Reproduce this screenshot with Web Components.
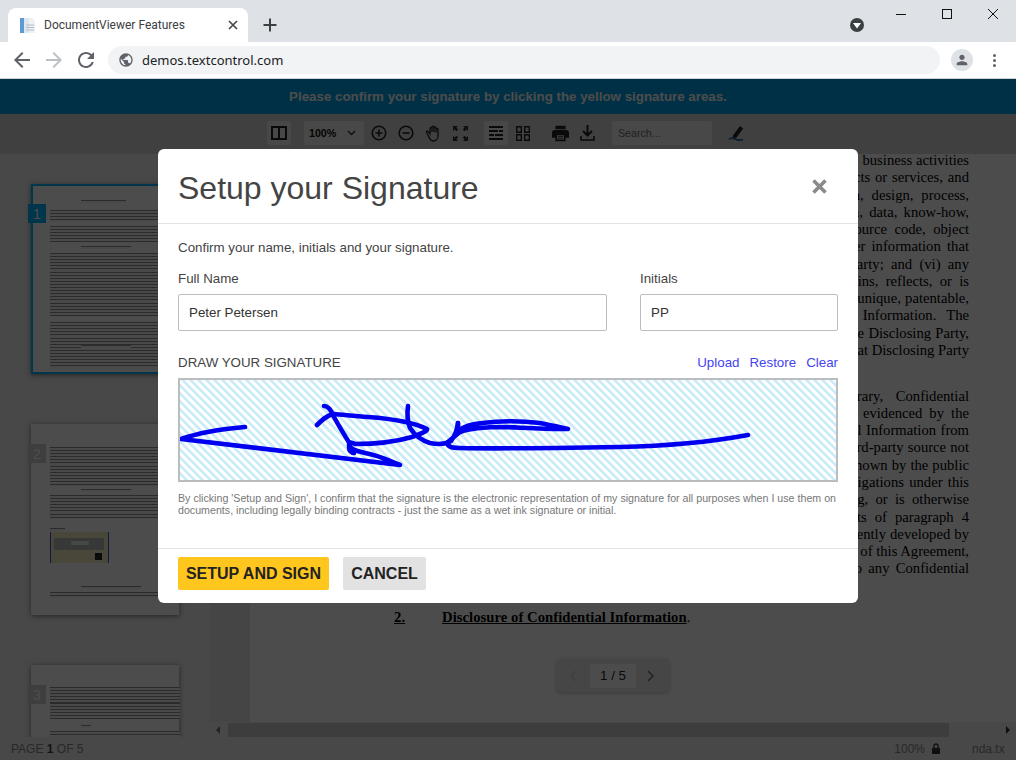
<!DOCTYPE html>
<html>
<head>
<meta charset="utf-8">
<title>DocumentViewer Features</title>
<style>
  html, body { margin: 0; height: 760px; overflow: hidden; }
  body { font-family: "Liberation Sans", Arial, sans-serif; background: #fff; }
</style>
</head>
<body>
<browser-chrome></browser-chrome>
<viewer-app>
  <sig-dialog></sig-dialog>
</viewer-app>

<script>
class BrowserChrome extends HTMLElement {
  connectedCallback() {
    const root = this.attachShadow({ mode: "open" });
    root.innerHTML = `
      <style>
        :host { display: block; height: 79px; font-family: "Noto Sans", sans-serif; }
        .strip { height: 42px; background: #dee1e6; display: flex; position: relative; padding: 8px 0 0 8px; box-sizing: border-box; }
        .tab { width: 240px; height: 34px; background: #fff; border-radius: 8px 8px 0 0; display: flex; align-items: center; box-sizing: border-box; padding: 0 9px 0 12px; font: 12px Roboto, sans-serif; color: #3c4043; }
        .tab .title { margin-left: 8px; flex: 1; white-space: nowrap; }
        .plus { margin: 7px 0 0 12px; width: 20px; height: 20px; }
        .spacer { flex: 1; }
        .win { display: flex; align-items: flex-start; }
        .ext { margin: 9px 13px 0 0; width: 16px; height: 16px; }
        .winbtn { width: 46px; height: 28px; margin-top: -8px; display: flex; align-items: center; justify-content: center; }
        .bar { height: 36px; background: #fff; display: flex; align-items: center; padding: 0 0 0 10px; border-bottom: 1px solid #d0d2d6; }
        .nav { width: 24px; height: 24px; margin-right: 8px; display: block; }
        .omni { flex: 1; margin-left: 2px; height: 28px; border-radius: 14px; background: #f1f3f4; display: flex; align-items: center; padding-left: 10px; font-size: 13px; color: #202124; }
        .omni svg { width: 16px; height: 16px; margin-right: 8px; }
        .profile { width: 22px; height: 22px; border-radius: 50%; background: #dee1e6; margin: 0 20px 0 11px; display: flex; align-items: center; justify-content: center; }
        .dots { width: 4px; margin-right: 19px; display: flex; flex-direction: column; gap: 2px; }
        .dots i { width: 3px; height: 3px; border-radius: 50%; background: #5f6368; display: block; }
      </style>
      <div class="strip">
        <div class="tab">
          <svg width="16" height="16" viewBox="0 0 16 16">
            <rect x="0" y="1" width="5" height="15" fill="#5b9bd5"/>
            <rect x="4" y="1" width="8" height="15" fill="#dfe6ec"/>
            <path d="M9 1h3l3 3v12H9z" fill="#eef1f4"/>
            <path d="M6 8h8M6 10.5h8M6 13h8" stroke="#b4bec8" stroke-width="1"/>
          </svg>
          <span class="title">DocumentViewer Features</span>
          <svg width="12" height="12" viewBox="0 0 12 12"><path d="M2 2l8 8M10 2l-8 8" stroke="#45484c" stroke-width="1.7"/></svg>
        </div>
        <svg class="plus" viewBox="0 0 20 20"><path d="M10 3.5v13M3.5 10h13" stroke="#3c4043" stroke-width="2"/></svg>
        <div class="spacer"></div>
        <div class="win">
          <svg class="ext" viewBox="0 0 16 16"><circle cx="8" cy="8" r="7" fill="#3c4043"/><path d="M4 6h8l-4 5.4z" fill="#fff"/></svg>
          <div class="winbtn"><svg width="12" height="12" viewBox="0 0 12 12"><path d="M1 6.5h10" stroke="#111" stroke-width="1"/></svg></div>
          <div class="winbtn"><svg width="12" height="12" viewBox="0 0 12 12"><rect x="1.5" y="1.5" width="9" height="9" fill="none" stroke="#111" stroke-width="1"/></svg></div>
          <div class="winbtn"><svg width="12" height="12" viewBox="0 0 12 12"><path d="M1 1l10 10M11 1L1 11" stroke="#111" stroke-width="1"/></svg></div>
        </div>
      </div>
      <div class="bar">
        <svg class="nav" viewBox="0 0 24 24"><path fill="#5f6368" d="M20 11H7.83l5.59-5.59L12 4l-8 8 8 8 1.41-1.41L7.83 13H20v-2z"/></svg>
        <svg class="nav" viewBox="0 0 24 24"><path fill="#bdc1c6" d="M12 4l-1.41 1.41L16.17 11H4v2h12.17l-5.58 5.59L12 20l8-8z"/></svg>
        <svg class="nav" viewBox="0 0 24 24"><path fill="#5f6368" d="M17.65 6.35C16.2 4.9 14.21 4 12 4c-4.42 0-7.99 3.58-7.99 8s3.57 8 7.99 8c3.73 0 6.84-2.55 7.73-6h-2.08c-.82 2.33-3.04 4-5.65 4-3.31 0-6-2.69-6-6s2.69-6 6-6c1.66 0 3.14.69 4.22 1.78L13 11h7V4l-2.35 2.35z"/></svg>
        <div class="omni">
          <svg viewBox="0 0 24 24"><path fill="#5f6368" d="M12 2C6.48 2 2 6.48 2 12s4.48 10 10 10 10-4.48 10-10S17.52 2 12 2zm-1 17.93c-3.95-.49-7-3.85-7-7.93 0-.62.08-1.21.21-1.79L9 15v1c0 1.1.9 2 2 2v1.93zm6.9-2.54c-.26-.81-1-1.39-1.9-1.39h-1v-3c0-.55-.45-1-1-1H8v-2h2c.55 0 1-.45 1-1V7h2c1.1 0 2-.9 2-2v-.41c2.93 1.19 5 4.06 5 7.41 0 2.08-.8 3.97-2.1 5.39z"/></svg>
          demos.textcontrol.com
        </div>
        <div class="profile"><svg width="16" height="16" viewBox="0 0 24 24"><path fill="#5f6368" d="M12 12c2.21 0 4-1.79 4-4s-1.79-4-4-4-4 1.79-4 4 1.79 4 4 4zm0 2c-2.67 0-8 1.34-8 4v2h16v-2c0-2.66-5.33-4-8-4z"/></svg></div>
        <div class="dots"><i></i><i></i><i></i></div>
      </div>
    `;
  }
}
customElements.define("browser-chrome", BrowserChrome);

class ViewerToolbar extends HTMLElement {
  connectedCallback() {
    const root = this.attachShadow({ mode: "open" });
    root.innerHTML = `
      <style>
        :host { display: flex; height: 40px; background: #d8d8d8; align-items: flex-start; justify-content: center; gap: 3px; padding-top: 7px; box-sizing: border-box; flex: none; }
        .btn { width: 24px; height: 24px; display: flex; align-items: center; justify-content: center; border-radius: 2px; }
        .btn.on { background: #f0f0f0; }
        .sep { width: 1px; height: 24px; margin: 0 3px; background: #cfcfcf; }
        .sep.tight { margin-left: 2px; }
        .sel { width: 60px; height: 24px; background: #f0f0f0; border-radius: 2px; box-sizing: border-box; padding: 0 8px 0 5px; display: flex; align-items: center; justify-content: space-between; font-size: 10.67px; font-weight: bold; color: #111; }
        .search { width: 100px; height: 24px; background: #f0f0f0; border-radius: 2px; box-sizing: border-box; padding-left: 6px; display: flex; align-items: center; font-size: 10.67px; color: #707070; }
        svg { display: block; }
      </style>
      <div class="btn on"><svg width="16" height="14" viewBox="0 0 16 14"><path d="M1 1h14v12H1zM8 1v12" fill="none" stroke="#222" stroke-width="2"/></svg></div>
      <div class="sep"></div>
      <div class="sel"><span>100%</span><svg width="9" height="6" viewBox="0 0 9 6"><path d="M1 1l3.5 3.5L8 1" fill="none" stroke="#333" stroke-width="1.4"/></svg></div>
      <div class="btn"><svg width="16" height="16" viewBox="0 0 16 16"><circle cx="8" cy="8" r="6.8" fill="none" stroke="#222" stroke-width="1.6"/><path d="M4.5 8h7M8 4.5v7" stroke="#222" stroke-width="1.6"/></svg></div>
      <div class="btn"><svg width="16" height="16" viewBox="0 0 16 16"><circle cx="8" cy="8" r="6.8" fill="none" stroke="#222" stroke-width="1.6"/><path d="M4.5 8h7" stroke="#222" stroke-width="1.6"/></svg></div>
      <div class="btn"><svg width="17" height="17" viewBox="0 0 17 17"><path d="M3.5 11L1.5 7.500c-.6-1.200 1-2 1.800-.9L5 9V3.500c0-1.400 2-1.400 2 0V7 2.200c0-1.400 2-1.400 2 0V7 3c0-1.400 2-1.400 2 0v4.500-3c0-1.400 2-1.400 2 0V11c0 3-2 5-4.600 5-2.300 0-3.700-1.500-4.900-5z" fill="none" stroke="#222" stroke-width="1.300"/></svg></div>
      <div class="btn"><svg width="15" height="15" viewBox="0 0 15 15" fill="#333"><path d="M0 0h5L3.400 1.600 5.200 3.400 3.400 5.200 1.600 3.400 0 5zM15 0v5L13.400 3.400 11.600 5.200 9.800 3.400 11.600 1.600 10 0zM0 15v-5l1.600 1.600 1.800-1.800 1.800 1.800-1.800 1.800L5 15zM15 15h-5l1.600-1.600-1.800-1.800 1.800-1.800 1.800 1.800L15 10z"/></svg></div>
      <div class="sep tight"></div>
      <div class="btn on"><svg width="14" height="14" viewBox="0 0 14 14" fill="#222"><path d="M0 0h14v2H0zM0 4h9v2H0zM10 4h4v2h-4zM0 8h5v2H0zM6 8h8v2H6zM0 12h14v2H0z"/></svg></div>
      <div class="btn"><svg width="14" height="15" viewBox="0 0 14 15"><path d="M.7.7h4.600v5.600H.7zM8.700.7h4.600v5.600H8.700zM.7 8.700h4.600v5.600H.7zM8.700 8.700h4.600v5.600H8.700z" fill="none" stroke="#222" stroke-width="1.400"/></svg></div>
      <div class="sep"></div>
      <div class="btn"><svg width="17" height="17" viewBox="2 3 20 18"><path fill="#222" d="M19 8H5c-1.660 0-3 1.340-3 3v6h4v4h12v-4h4v-6c0-1.660-1.340-3-3-3zm-3 11H8v-5h8v5zM18 3H6v4h12V3z"/><path d="M9 15.500h6M9 17.500h6" stroke="#1d3f55" stroke-width="1"/></svg></div>
      <div class="btn"><svg width="15" height="16" viewBox="0 0 15 16"><path d="M7.500 0v10M3 6l4.500 4.500L12 6" fill="none" stroke="#222" stroke-width="2"/><path d="M1 11v4h13v-4" fill="none" stroke="#222" stroke-width="1.600"/></svg></div>
      <div class="sep"></div>
      <div class="search">Search...</div>
      <div class="sep"></div>
      <div class="btn"><svg width="18" height="18" viewBox="0 0 18 18"><path d="M5 11.500L12 2l3.200 2.400L8.500 13.500l-3.700 1z" fill="#222"/><path d="M1 15.500c2-2.500 4-1.500 6-.5s5 1.500 8 .5" fill="none" stroke="#26628c" stroke-width="1.600"/></svg></div>
    `;
  }
}
customElements.define("viewer-toolbar", ViewerToolbar);

// text lines of a miniature page, drawn as hairline blocks
class ThumbPage extends HTMLElement {
  connectedCallback() {
    const n = this.getAttribute("num");
    const active = this.hasAttribute("active");
    const blocks = (this.getAttribute("blocks") || "").split(";").filter(Boolean).map(b => {
      const [top, left, w, h] = b.split(",");
      return `<div class="lines" style="top:${top}px;left:${left}px;width:${w}px;height:${h}px"></div>`;
    }).join("");
    const root = this.attachShadow({ mode: "open" });
    root.innerHTML = `
      <style>
        :host { display: block; position: relative; width: 148px; height: ${this.getAttribute("h") || 191}px; background: #fff; box-sizing: border-box; box-shadow: 0 1px 5px rgba(0,0,0,.5); flex: none; ${active ? "outline: 2px solid #00b4ff; outline-offset: -2px;" : ""} }
        .badge { position: absolute; left: -3px; top: 20px; width: 18px; height: 19px; display: flex; align-items: center; justify-content: center; font: 14px "Liberation Sans", sans-serif; color: #fff; background: ${active ? "#00b4ff" : "#cfcfcf"}; }
        .lines { position: absolute; background: repeating-linear-gradient(#909090 0 1px, #f4f4f4 1px 3.100px); }
        ::slotted(*) { position: absolute; }
      </style>
      <div class="badge">${n}</div>
      ${blocks}
      <slot></slot>
    `;
  }
}
customElements.define("thumb-page", ThumbPage);

class ThumbSidebar extends HTMLElement {
  connectedCallback() {
    const root = this.attachShadow({ mode: "open" });
    root.innerHTML = `
      <style>
        :host { display: flex; flex-direction: column; width: 210px; flex: none; padding: 30px 0 0 31px; box-sizing: border-box; gap: 50px; background: #f0f0f0; overflow: hidden; }
      </style>
      <thumb-page num="1" active h="190" blocks="16,50,45,3;26,19,130,12;42,19,130,16;62,50,50,3;69,19,130,64;138,19,130,47;161,50,50,3"></thumb-page>
      <thumb-page num="2" blocks="23,19,130,39;65,50,50,3;71,19,130,24;104,19,15,3;162,50,60,3;168,19,130,6">
        <div style="left:19px;top:108px;width:59px;height:31px;background:#f6edc0;border-left:1px solid #3a50e0;border-right:1px solid #3a50e0;box-sizing:border-box;">
          <div style="margin:6px 0 0 3px;width:50px;height:12px;background:#bbb"></div>
          <div style="position:absolute;left:20px;top:9px;width:18px;height:4px;background:#eee"></div>
          <div style="position:absolute;right:6px;bottom:3px;width:7px;height:7px;background:#222"></div>
        </div>
      </thumb-page>
      <thumb-page num="3" blocks="22,19,130,32;60,50,10,3;66,19,130,20"></thumb-page>
    `;
  }
}
customElements.define("thumb-sidebar", ThumbSidebar);

const DOC_TOP = [
  ["business activities", 0.3], ["products or services, and", 1.2], ["plan, design, process,", 4.2],
  ["idea, data, know-how,", 2.6], ["source code, object", 3.8], ["other information that", 2.6],
  ["Party; and (vi) any", 3.6], ["contains, reflects, or is", 3.6], ["unique, patentable,", 0.6],
  ["Confidential Information. The", 6.5], ["the Disclosing Party,", 0.6], ["that Disclosing Party", 0]
];
const DOC_BOTTOM = [
  ["library, Confidential", 9], ["as evidenced by the", 3.4], ["Confidential Information from", 0.8],
  ["third-party source not", 0.5], ["known by the public", 0.4], ["obligations under this", 1.6],
  ["being, or is otherwise", 3.6], ["requirements of paragraph 4", 4.4], ["independently developed by", 0.4],
  ["of this Agreement,", 0], ["to any Confidential", 2.6]
];

class DocPage extends HTMLElement {
  connectedCallback() {
    const line = ([t, ws]) => `<div class="ln" style="word-spacing:${ws}px">${t}</div>`;
    const root = this.attachShadow({ mode: "open" });
    root.innerHTML = `
      <style>
        :host { display: block; flex: 1; min-height: 0; overflow: hidden; position: relative; background: #e6e6e6; font: 14.67px/17.27px "Liberation Serif", serif; color: #000; }
        .page { margin-left: 40px; background: #fff; height: 100%; padding: 0 47px 0 144px; box-sizing: border-box; }
        .inner { transform: translateY(-2px); }
        .ln { text-align: right; white-space: nowrap; }
        .block2 { margin-top: 28.500px; }
        h2 { font: bold 14.67px/17.27px "Liberation Serif", serif; margin: 31px 0 0; display: flex; letter-spacing: .05px; }
        h2 span { width: 48px; }
        h2 span, h2 u { text-decoration: underline; }
        .rest { font-weight: normal; }
      </style>
      <div class="page"><div class="inner">
        ${DOC_TOP.map(line).join("")}
        <div class="block2">${DOC_BOTTOM.map(line).join("")}</div>
        <h2><span>2.</span><u>Disclosure of Confidential Information</u><b class="rest">.</b></h2>
      </div></div>
      <slot></slot>
    `;
  }
}
customElements.define("doc-page", DocPage);

class DocPager extends HTMLElement {
  connectedCallback() {
    const root = this.attachShadow({ mode: "open" });
    root.innerHTML = `
      <style>
        :host { position: absolute; left: 347px; top: 505px; width: 112px; height: 33px; background: #ebebeb; border-radius: 4px; box-shadow: 0 1px 4px rgba(0,0,0,.25); display: flex; align-items: center; padding: 0 0 0 12px; box-sizing: border-box; }
        .cur { width: 46px; height: 24px; margin: 0 10px 0 12px; background: #fff; display: flex; align-items: center; justify-content: center; font: 13.33px "Liberation Sans", sans-serif; color: #222; }
      </style>
      <svg width="9" height="14" viewBox="0 0 9 14"><path d="M7 2L2 7l5 5" fill="none" stroke="#d0d0d0" stroke-width="1.600"/></svg>
      <div class="cur">1 / 5</div>
      <svg width="9" height="14" viewBox="0 0 9 14"><path d="M2 2l5 5-5 5" fill="none" stroke="#777" stroke-width="1.600"/></svg>
    `;
  }
}
customElements.define("doc-pager", DocPager);

class StatusBar extends HTMLElement {
  connectedCallback() {
    const root = this.attachShadow({ mode: "open" });
    root.innerHTML = `
      <style>
        :host { display: flex; height: 23px; flex: none; background: #f0f0f0; align-items: center; font-size: 12px; color: #888; padding: 0 11px; box-sizing: border-box; }
        .sp { flex: 1; }
        b { color: #444; }
        svg { margin: 0 0 0 6px; }
        .file { margin-left: 31px; width: 33px; overflow: hidden; white-space: nowrap; }
      </style>
      <span>PAGE <b>1</b> OF 5</span>
      <span class="sp"></span>
      <span>100%</span>
      <svg width="10" height="12" viewBox="0 0 10 12"><path d="M1 5h8v6H1z" fill="#333"/><path d="M3 5V3a2 2 0 014 0v2" fill="none" stroke="#333" stroke-width="1.400"/></svg>
      <span class="file">nda.tx</span>
    `;
  }
}
customElements.define("status-bar", StatusBar);

class SigDialog extends HTMLElement {
  connectedCallback() {
    const root = this.attachShadow({ mode: "open" });
    root.innerHTML = `
      <style>
        :host { position: absolute; left: 158px; top: 70px; width: 700px; height: 454px; background: #fff; border-radius: 6px; font-family: "Liberation Sans", sans-serif; display: flex; flex-direction: column; color: #444; }
        header { height: 75px; flex: none; box-sizing: border-box; border-bottom: 1px solid #e3e3e3; display: flex; align-items: center; justify-content: space-between; padding: 0 30px 0 20px; }
        h1 { margin: 5px 0 0; font-size: 32px; font-weight: normal; color: #444; }
        main { flex: 1; padding: 16px 20px 0; display: flex; flex-direction: column; }
        p { margin: 0; font-size: 13.33px; line-height: 16px; }
        .row { display: flex; gap: 33px; margin-top: 15px; }
        .name { flex: 1; }
        .init { width: 198px; flex: none; }
        label { display: block; font-size: 13.33px; line-height: 16px; }
        .input { margin-top: 7px; height: 37px; border: 1px solid #bdbdbd; border-radius: 2px; box-sizing: border-box; display: flex; align-items: center; padding-left: 10px; font-size: 13.33px; color: #333; }
        .draw-head { display: flex; justify-content: space-between; margin-top: 24px; font-size: 13.33px; line-height: 16px; }
        .links { display: flex; gap: 10px; color: #4444ee; }
        .pad { margin-top: 7px; height: 104px; box-sizing: border-box; border: 2px solid #bcbcbc; background: repeating-linear-gradient(45deg, #fff 0 2.830px, #cdecf9 2.830px 5.660px); }
        .pad svg { display: block; }
        p.legal { margin-top: 10px; font-size: 10.67px; line-height: 12px; color: #777; }
        footer { height: 55px; flex: none; box-sizing: border-box; border-top: 1px solid #e3e3e3; display: flex; gap: 14px; padding: 8px 20px 0; }
        button { font: bold 16px "Liberation Sans", sans-serif; color: #222; height: 33px; border: 0; border-radius: 2px; padding: 0; }
        .primary { width: 151px; background: #ffc61e; }
        .ghost { width: 83px; background: #e2e2e2; }
      </style>
      <header>
        <h1>Setup your Signature</h1>
        <svg width="17" height="17" viewBox="0 0 17 17"><path d="M2.500 2.500l12 12M14.500 2.500l-12 12" stroke="#8a8a8a" stroke-width="3.600"/></svg>
      </header>
      <main>
        <p>Confirm your name, initials and your signature.</p>
        <div class="row">
          <div class="name"><label>Full Name</label><div class="input">Peter Petersen</div></div>
          <div class="init"><label>Initials</label><div class="input">PP</div></div>
        </div>
        <div class="draw-head"><span>DRAW YOUR SIGNATURE</span><span class="links"><span>Upload</span><span>Restore</span><span>Clear</span></span></div>
        <div class="pad">
          <svg width="656" height="100" viewBox="180 380 656 100" fill="none" stroke="#0000ee" stroke-width="4.600" stroke-linecap="round" stroke-linejoin="round">
            <path d="M245 427C222 429 198 433 181 439C250 447 320 456 400 465C390 461 378 455 365 453C358 451 350 450 349 445C349 441 352 443 355 444C375 444 395 442 412 437C420 434 428 431 427 429C415 423 395 419 368 417C355 416 345 415 333 414C326 416 322 420 317 425"/>
            <path d="M324 406C329 406 332 412 334 417C340 428 345 436 350 444C348 448 349 452 354 453"/>
            <path d="M408 406C407 413 407 420 410 428C414 434 420 440 430 443C440 445 446 444 451 441C455 436 457 430 458 423"/>
            <path d="M458 423C458 428 458 432 459 430C465 426 472 424 482 423C498 421 520 420.500 540 423C550 425 560 427 568 429C550 429.500 528 428 505 427C485 427 470 428 460 432C455 436 450 440 447 443C448 447 452 448 460 448C500 449 560 448 620 447C670 446 710 442 748 435"/>
          </svg>
        </div>
        <p class="legal">By clicking 'Setup and Sign', I confirm that the signature is the electronic representation of my signature for all purposes when I use them on documents, including legally binding contracts - just the same as a wet ink signature or initial.</p>
      </main>
      <footer>
        <button class="primary">SETUP AND SIGN</button>
        <button class="ghost">CANCEL</button>
      </footer>
    `;
  }
}
customElements.define("sig-dialog", SigDialog);

class ViewerApp extends HTMLElement {
  connectedCallback() {
    const root = this.attachShadow({ mode: "open" });
    root.innerHTML = `
      <style>
        :host { display: flex; flex-direction: column; position: relative; height: 681px; overflow: hidden; }
        .banner { height: 35px; flex: none; background: #00a0e6; color: #fff; font: bold 13.33px "Liberation Sans", sans-serif; display: flex; align-items: center; justify-content: center; }
        .main { flex: 1; min-height: 0; display: flex; }
        .right { flex: 1; min-width: 0; display: flex; flex-direction: column; }
        .hscroll { height: 15px; flex: none; background: #f0f0f0; display: flex; align-items: center; padding: 0 6px; gap: 4px; box-sizing: border-box; }
        .thumb { flex: 1; height: 14px; background: #cdcdcd; margin: 0 53px 0 4px; }
        .tri { width: 0; height: 0; border: 4px solid transparent; }
        .tri.l { border-right-color: #777; border-left: 0; }
        .tri.r { border-left-color: #333; border-right: 0; }
        .scrim { position: absolute; inset: 0; background: rgba(0,0,0,.7); }
        ::slotted(sig-dialog) { z-index: 2; }
      </style>
      <div class="banner">Please confirm your signature by clicking the yellow signature areas.</div>
      <viewer-toolbar></viewer-toolbar>
      <div class="main">
        <thumb-sidebar></thumb-sidebar>
        <div class="right">
          <doc-page><doc-pager></doc-pager></doc-page>
          <div class="hscroll"><span class="tri l"></span><span class="thumb"></span><span class="tri r"></span></div>
        </div>
      </div>
      <status-bar></status-bar>
      <div class="scrim"></div>
      <slot></slot>
    `;
  }
}
customElements.define("viewer-app", ViewerApp);
</script>
</body>
</html>
